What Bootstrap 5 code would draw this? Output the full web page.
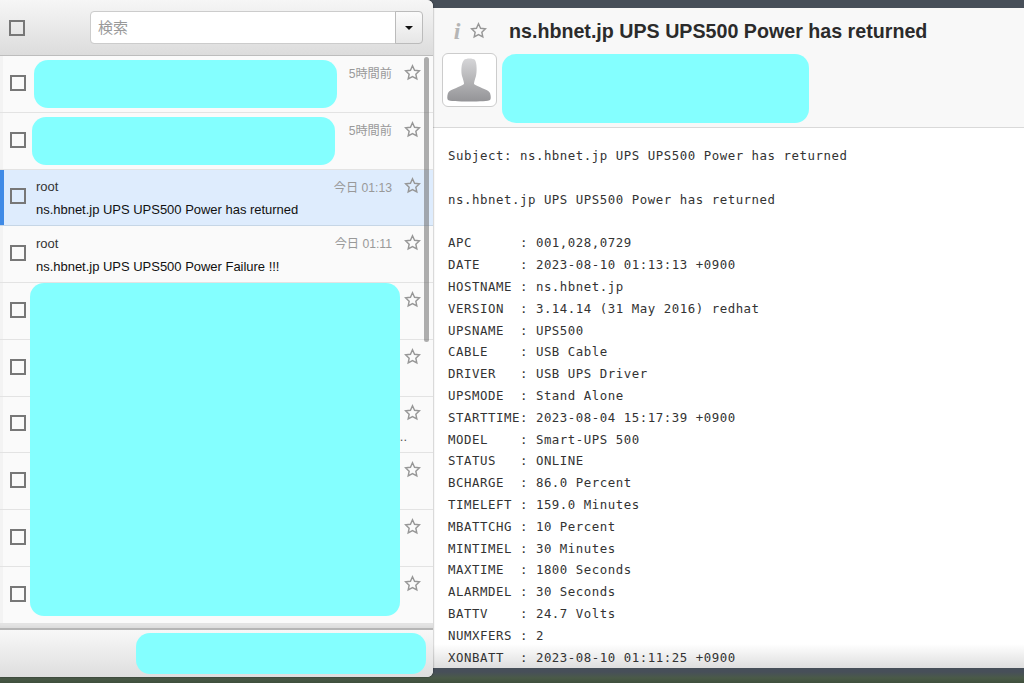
<!DOCTYPE html>
<html lang="ja">
<head>
<meta charset="utf-8">
<title>Mail</title>
<link href="https://cdn.jsdelivr.net/npm/bootstrap@5.3.0/dist/css/bootstrap.min.css" rel="stylesheet">
<style>
html,body{height:683px;overflow:hidden}
body{background:linear-gradient(#474f59 0,#474f59 672px,#4a5a48 678px,#3f4f3c 683px);font-family:"Liberation Sans","Noto Sans CJK JP",sans-serif;font-size:12px;color:#222}
.left-pane{width:433px;height:677px;border-radius:0 6px 6px 0;background:#fafafa;box-shadow:0 0 2px rgba(0,0,0,.55);z-index:2;overflow:hidden}
.list-head{height:56px;padding:0 9px 0 9px;background:linear-gradient(#f6f6f6,#dcdcdc);border-bottom:1px solid #bdbdbd}
input.sq[type=checkbox]{width:16px;height:16px;margin:0;flex:none;border:2px solid #777;border-radius:0;background-color:transparent}
.msg-row input.sq[type=checkbox]{margin-top:-2px}
.search-group{width:333px;margin-left:65px}
.search-group .form-control{height:33px;padding:0 7px;font-size:15px;border-color:#ccc;border-radius:4px 0 0 4px;box-shadow:none}
.search-group .form-control::placeholder{color:#999}
.search-group .btn{width:28px;height:33px;padding:0;background:linear-gradient(#fbfbfb,#e6e6e6);border:1px solid #bbb;border-radius:0 4px 4px 0;color:#111}
.search-group .dropdown-toggle::after{margin:0;vertical-align:middle;border-top-color:#111}
.msg-list{height:572px;background:#e9e9e9;box-shadow:inset 0 -8px 6px -6px #d6d6d6}
.msg-row{height:56.75px;padding:0 12px 0 10px;border-bottom:1px solid #e3e3e3;background:#fafafa;box-shadow:inset 3px 0 0 #f3f3f3}
.msg-row.is-open{background:#deecfd;border-bottom-color:#c6d6e6;box-shadow:inset 4px 0 0 #3f8ae6}
.msg-body{flex:1;min-width:0;padding:8.5px 0 0 10px;line-height:17px;font-size:13px;letter-spacing:-.02px}
.msg-from{height:22.75px;color:#333}
.msg-subject{color:#111}
.msg-more{text-align:right;margin-right:-3px;color:#555}
.msg-time{color:#999;width:70px;text-align:right;margin-right:12px;padding-top:10px;line-height:17px;flex:none;font-size:12.2px}
.msg-star{width:17px;flex:none;padding-top:6.5px;align-self:flex-start}
.list-foot{height:49px;border-top:2px solid #b5b5b5;background:linear-gradient(#f8f8f8,#dedede)}
.mask{position:absolute;background:#84ffff;border-radius:14px;z-index:3}
.scroll-thumb{position:absolute;left:424px;top:57px;width:5px;height:285px;border-radius:3px;background:rgba(110,110,110,.55);z-index:4}
.right-pane{flex:1;height:660px;margin-top:8px;background:linear-gradient(#fff 636px,#dedede 660px);overflow:hidden}
.mail-head{height:120px;background:#f8f8f8;border-bottom:1px solid #d9d9d9;padding:0 0 0 9px}
.mail-tools{height:45px}
.info-i{width:18px;margin-left:6px;font-family:"Liberation Serif",serif;font-style:italic;font-weight:700;font-size:24px;color:#b5b5b5;line-height:1;text-align:center}
.mail-title{font-size:19.67px;font-weight:700;color:#2b2b2b;margin:2px 0 0 22px;line-height:1;white-space:nowrap}
.avatar{width:55px;height:54px;border:1px solid #ccc;border-radius:6px;background:#fff;padding:3px;overflow:hidden}
.mail-text{margin:0;padding:17px 0 0 15px;font-family:"DejaVu Sans Mono",monospace;font-size:12.4px;letter-spacing:.53px;line-height:21.82px;color:#333;overflow:hidden}
.star-ico{fill:none;stroke:#979797;stroke-width:2}
</style>
</head>
<body class="d-flex align-items-start position-relative">
<aside class="left-pane d-flex flex-column position-relative">
  <div class="list-head d-flex align-items-center">
    <input class="form-check-input sq" type="checkbox" aria-label="all">
    <div class="input-group search-group flex-nowrap">
      <input class="form-control" type="text" placeholder="検索">
      <button class="btn dropdown-toggle" type="button" aria-label="menu"></button>
    </div>
  </div>
  <div class="msg-list">
    <div class="msg-row d-flex align-items-center"><input class="form-check-input sq" type="checkbox"><div class="msg-body align-self-start"></div><div class="msg-time align-self-start">5時間前</div><div class="msg-star"><svg class="star-ico" width="17" height="17" viewBox="0 0 24 24"><path d="M12 2.5l2.9 6.3 6.9.8-5.1 4.7 1.4 6.8-6.1-3.4-6.1 3.4 1.4-6.8-5.1-4.7 6.9-.8z"/></svg></div></div>
    <div class="msg-row d-flex align-items-center"><input class="form-check-input sq" type="checkbox"><div class="msg-body align-self-start"></div><div class="msg-time align-self-start">5時間前</div><div class="msg-star"><svg class="star-ico" width="17" height="17" viewBox="0 0 24 24"><path d="M12 2.5l2.9 6.3 6.9.8-5.1 4.7 1.4 6.8-6.1-3.4-6.1 3.4 1.4-6.8-5.1-4.7 6.9-.8z"/></svg></div></div>
    <div class="msg-row is-open d-flex align-items-center"><input class="form-check-input sq" type="checkbox"><div class="msg-body align-self-start"><div class="msg-from">root</div><div class="msg-subject text-nowrap">ns.hbnet.jp UPS UPS500 Power has returned</div></div><div class="msg-time align-self-start">今日 01:13</div><div class="msg-star"><svg class="star-ico" width="17" height="17" viewBox="0 0 24 24"><path d="M12 2.5l2.9 6.3 6.9.8-5.1 4.7 1.4 6.8-6.1-3.4-6.1 3.4 1.4-6.8-5.1-4.7 6.9-.8z"/></svg></div></div>
    <div class="msg-row d-flex align-items-center"><input class="form-check-input sq" type="checkbox"><div class="msg-body align-self-start"><div class="msg-from">root</div><div class="msg-subject text-nowrap">ns.hbnet.jp UPS UPS500 Power Failure !!!</div></div><div class="msg-time align-self-start">今日 01:11</div><div class="msg-star"><svg class="star-ico" width="17" height="17" viewBox="0 0 24 24"><path d="M12 2.5l2.9 6.3 6.9.8-5.1 4.7 1.4 6.8-6.1-3.4-6.1 3.4 1.4-6.8-5.1-4.7 6.9-.8z"/></svg></div></div>
    <div class="msg-row d-flex align-items-center"><input class="form-check-input sq" type="checkbox"><div class="msg-body align-self-start"></div><div class="msg-star"><svg class="star-ico" width="17" height="17" viewBox="0 0 24 24"><path d="M12 2.5l2.9 6.3 6.9.8-5.1 4.7 1.4 6.8-6.1-3.4-6.1 3.4 1.4-6.8-5.1-4.7 6.9-.8z"/></svg></div></div>
    <div class="msg-row d-flex align-items-center"><input class="form-check-input sq" type="checkbox"><div class="msg-body align-self-start"></div><div class="msg-star"><svg class="star-ico" width="17" height="17" viewBox="0 0 24 24"><path d="M12 2.5l2.9 6.3 6.9.8-5.1 4.7 1.4 6.8-6.1-3.4-6.1 3.4 1.4-6.8-5.1-4.7 6.9-.8z"/></svg></div></div>
    <div class="msg-row d-flex align-items-center"><input class="form-check-input sq" type="checkbox"><div class="msg-body align-self-start"><div class="msg-from"></div><div class="msg-subject msg-more">..</div></div><div class="msg-star"><svg class="star-ico" width="17" height="17" viewBox="0 0 24 24"><path d="M12 2.5l2.9 6.3 6.9.8-5.1 4.7 1.4 6.8-6.1-3.4-6.1 3.4 1.4-6.8-5.1-4.7 6.9-.8z"/></svg></div></div>
    <div class="msg-row d-flex align-items-center"><input class="form-check-input sq" type="checkbox"><div class="msg-body align-self-start"></div><div class="msg-star"><svg class="star-ico" width="17" height="17" viewBox="0 0 24 24"><path d="M12 2.5l2.9 6.3 6.9.8-5.1 4.7 1.4 6.8-6.1-3.4-6.1 3.4 1.4-6.8-5.1-4.7 6.9-.8z"/></svg></div></div>
    <div class="msg-row d-flex align-items-center"><input class="form-check-input sq" type="checkbox"><div class="msg-body align-self-start"></div><div class="msg-star"><svg class="star-ico" width="17" height="17" viewBox="0 0 24 24"><path d="M12 2.5l2.9 6.3 6.9.8-5.1 4.7 1.4 6.8-6.1-3.4-6.1 3.4 1.4-6.8-5.1-4.7 6.9-.8z"/></svg></div></div>
    <div class="msg-row d-flex align-items-center"><input class="form-check-input sq" type="checkbox"><div class="msg-body align-self-start"></div><div class="msg-star"><svg class="star-ico" width="17" height="17" viewBox="0 0 24 24"><path d="M12 2.5l2.9 6.3 6.9.8-5.1 4.7 1.4 6.8-6.1-3.4-6.1 3.4 1.4-6.8-5.1-4.7 6.9-.8z"/></svg></div></div>
  </div>
  <div class="list-foot"></div>
  <div class="mask" style="left:34px;top:60px;width:303px;height:48px"></div>
  <div class="mask" style="left:32px;top:117px;width:303px;height:48px"></div>
  <div class="mask" style="left:30px;top:283px;width:370px;height:333px"></div>
  <div class="mask" style="left:136px;top:633px;width:290px;height:41px"></div>
  <div class="scroll-thumb"></div>
</aside>
<main class="right-pane position-relative">
  <header class="mail-head">
    <div class="mail-tools d-flex align-items-center">
      <span class="info-i">i</span>
      <svg class="star-ico ms-1" width="17" height="17" viewBox="0 0 24 24"><path d="M12 2.5l2.9 6.3 6.9.8-5.1 4.7 1.4 6.8-6.1-3.4-6.1 3.4 1.4-6.8-5.1-4.7 6.9-.8z"/></svg>
      <h1 class="mail-title">ns.hbnet.jp UPS UPS500 Power has returned</h1>
    </div>
    <div class="avatar">
      <svg width="47" height="46" viewBox="0 0 47 46"><defs><linearGradient id="av" x1="0" y1="0" x2="0" y2="1"><stop offset="0" stop-color="#d6d6d8"/><stop offset="1" stop-color="#949497"/></linearGradient></defs><path fill="url(#av)" d="M18 3c2-2 9-2 11 0 2 3 2 12 1 16-1 3-2 6-2 8 3 3 14 5 16 9 1 3 1 6 0 7-1 2-41 2-42 0-1-1-1-4 0-7 2-4 13-6 16-9 0-2-1-5-2-8-1-4-1-13 2-16z"/></svg>
    </div>
  </header>
  <pre class="mail-text">Subject: ns.hbnet.jp UPS UPS500 Power has returned

ns.hbnet.jp UPS UPS500 Power has returned

APC      : 001,028,0729
DATE     : 2023-08-10 01:13:13 +0900
HOSTNAME : ns.hbnet.jp
VERSION  : 3.14.14 (31 May 2016) redhat
UPSNAME  : UPS500
CABLE    : USB Cable
DRIVER   : USB UPS Driver
UPSMODE  : Stand Alone
STARTTIME: 2023-08-04 15:17:39 +0900
MODEL    : Smart-UPS 500
STATUS   : ONLINE
BCHARGE  : 86.0 Percent
TIMELEFT : 159.0 Minutes
MBATTCHG : 10 Percent
MINTIMEL : 30 Minutes
MAXTIME  : 1800 Seconds
ALARMDEL : 30 Seconds
BATTV    : 24.7 Volts
NUMXFERS : 2
XONBATT  : 2023-08-10 01:11:25 +0900</pre>
  <div class="mask" style="left:69px;top:46px;width:307px;height:69px"></div>
</main>
</body>
</html>
